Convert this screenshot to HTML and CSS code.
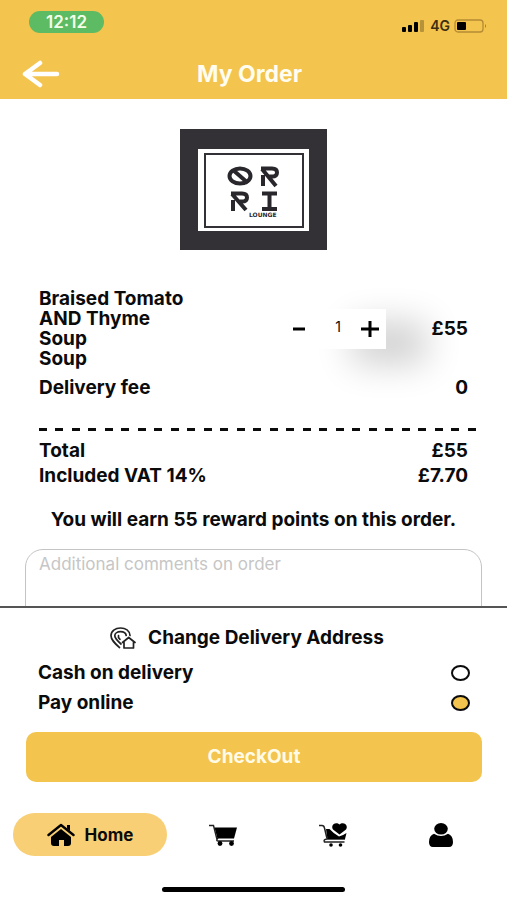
FILE: index.html
```html
<!DOCTYPE html>
<html lang="en">
<head>
<meta charset="utf-8">
<meta name="viewport" content="width=device-width, initial-scale=1">
<title>My Order</title>
<link rel="stylesheet" href="styles.css">
</head>
<body>
<header class="top">
  <div class="status">
    <span class="clock">12:12</span>
    <div class="signals">
      <svg width="24" height="12" viewBox="0 0 24 12" aria-hidden="true">
        <rect x="0" y="7" width="4" height="5" rx="1"/>
        <rect x="6" y="5" width="4" height="7" rx="1"/>
        <rect x="12" y="2" width="4" height="10" rx="1"/>
        <rect x="18" y="0" width="4" height="12" rx="1" opacity=".25"/>
      </svg>
      <span class="network">4G</span>
      <svg width="33" height="14" viewBox="0 0 33 14" aria-hidden="true">
        <rect x="1" y="1" width="28" height="12" rx="3" fill="none" stroke="#b58a34" stroke-width="1.3"/>
        <rect x="3" y="3" width="9" height="8" rx="1"/>
        <path d="M31 5q2 2 0 4z" fill="#a67c2a"/>
      </svg>
    </div>
  </div>
  <div class="titlebar">
    <button class="back" type="button" aria-label="Back">
      <svg width="38" height="28" viewBox="0 0 38 28" fill="none" stroke="#fff" stroke-width="4.500" stroke-linecap="round" stroke-linejoin="round" aria-hidden="true"><path d="M35 14H3M18 3L3 14l15 11"/></svg>
    </button>
    <h1>My Order</h1>
  </div>
</header>

<main class="order">
  <svg class="logo" width="147" height="121" viewBox="0 0 147 121" role="img" aria-label="Orri Lounge">
    <rect width="147" height="121" fill="#333135"/>
    <rect x="18" y="20" width="111" height="82" fill="#fff"/>
    <rect x="25" y="25" width="98" height="73" fill="none" stroke="#333135" stroke-width="2"/>
    <g fill="none" stroke="#29272b" stroke-width="4">
      <ellipse cx="60" cy="47" rx="10.500" ry="7.500"/>
      <path d="M53 41L68 54"/>
      <path d="M81 39.500h11q5 0 5 4t-5 4h-4M82 40l14 17M83 46v11"/>
      <path d="M51 64.500h11q5 0 5 4t-5 4h-4M52 65l14 16M53 71v11"/>
      <path d="M82 64.500h15M82 80h15M89.500 65v15"/>
    </g>
    <text class="logo-text" x="69" y="88">LOUNGE</text>
  </svg>

  <section class="bill">
    <div class="item">
      <p class="name">Braised Tomato AND Thyme Soup<br>Soup</p>
      <div class="stepper">
        <button type="button" aria-label="Decrease quantity"><svg width="12" height="18" viewBox="0 0 12 18" aria-hidden="true"><path d="M0 9h12" stroke="#000" stroke-width="3"/></svg></button>
        <div class="more">
          <span class="count">1</span>
          <button type="button" aria-label="Increase quantity"><svg width="18" height="18" viewBox="0 0 18 18" aria-hidden="true"><path d="M0 9h18M9 1v16" stroke="#000" stroke-width="3"/></svg></button>
        </div>
      </div>
      <span class="price">£55</span>
    </div>
    <div class="row fee"><span>Delivery fee</span><span>0</span></div>
    <div class="divider"></div>
    <div class="row"><span>Total</span><span>£55</span></div>
    <div class="row"><span>Included VAT 14%</span><span>£7.70</span></div>
  </section>
  <p class="reward">You will earn 55 reward points on this order.</p>
  <textarea class="comments" aria-label="Additional comments on order" placeholder="Additional comments on order"></textarea>
</main>

<section class="sheet">
  <button class="address" type="button">
    <svg width="26" height="22" viewBox="0 0 26 22" fill="none" stroke="#222" stroke-width="1.700" stroke-linejoin="round" stroke-linecap="round" aria-hidden="true">
      <path d="M9.500 20.500C5 16.500 1 13 1 8.800C1 4.200 5.200 1 10.500 1C15.600 1 19.500 3.800 20 8.500"/>
      <path d="M11 17C7 13.500 4.800 11.500 4.800 8.800C4.800 6.500 7.200 4.700 10.500 4.700C13.500 4.700 15.800 6 16.200 8.500"/>
      <path d="M10 12.300Q7.800 10.500 8.500 8.600"/>
      <path d="M12.500 15.500L18.700 10.500l6.300 5h-1.500V21h-9.500v-5.500z"/>
    </svg>
    Change Delivery Address
  </button>
  <label class="row pay">Cash on delivery<input type="radio" name="pay"></label>
  <label class="row pay">Pay online<input type="radio" name="pay" checked></label>
  <button class="checkout" type="button">CheckOut</button>
</section>

<nav class="tabs" aria-label="Main">
  <a class="tab active" href="#home" aria-current="page">
    <svg width="28" height="23" viewBox="0 0 28 23" aria-hidden="true">
      <path d="M1.500 12L14 2l12.500 10" fill="none" stroke="#000" stroke-width="2.400" stroke-linecap="round" stroke-linejoin="round"/>
      <path d="M20 2h3v6l-3-2.400zM14 6l10 8v6q0 3-3 3h-4v-6h-5v6H7q-3 0-3-3v-6z"/>
    </svg>
    Home
  </a>
  <a class="tab" href="#cart" aria-label="Cart">
    <svg width="28" height="22" viewBox="0 0 28 22" aria-hidden="true">
      <path d="M0 1.500h4.500L8 15.500M9 14Q6.500 17 9 17h16" fill="none" stroke="#222" stroke-width="1.400"/>
      <path d="M5.500 3.500H28L25 14.500H8.500z"/>
      <circle cx="11" cy="19.500" r="2.400"/><circle cx="22.500" cy="19.500" r="2.400"/>
    </svg>
  </a>
  <a class="tab" href="#favourites" aria-label="Favourites">
    <svg width="28" height="24" viewBox="0 0 28 24" aria-hidden="true">
      <path d="M0 2.500h3q2 0 2.500 2.500L8 15.500M8 16H26M8 16Q4 16.500 5.500 19H25.500" fill="none" stroke="#222" stroke-width="1.500"/>
      <path d="M7 6h3.500Q14 10 20 13.500Q24 12.500 27.500 10L26 16H8.500z"/>
      <path d="M20.500 11.500L14 6.500C11 2 17 -2 20.500 1.500C24 -2 30 2 27 6.500z"/>
      <circle cx="12" cy="22" r="1.800"/><circle cx="21.500" cy="22" r="1.800"/>
    </svg>
  </a>
  <a class="tab" href="#profile" aria-label="Profile">
    <svg width="24" height="24" viewBox="0 0 24 24" aria-hidden="true">
      <ellipse cx="12" cy="5.800" rx="6.800" ry="5.800"/>
      <path d="M5 10.800q7 4.500 14 0 5 2 5 8.200 0 5-4 5H4q-4 0-4-5 0-6.200 5-8.200z"/>
    </svg>
  </a>
</nav>
<div class="home-bar"></div>
</body>
</html>
```
FILE: styles.css
```css
* {
  box-sizing: border-box;
}

body {
  margin: 0;
  height: 100vh;
  display: flex;
  flex-direction: column;
  overflow: hidden;
  background: #fff;
  color: #0b0b0b;
  font: 700 19px/20px Inter, "Liberation Sans", sans-serif;
  font-optical-sizing: none;
}

button,
textarea {
  font: inherit;
  font-optical-sizing: none;
  color: inherit;
}

button {
  border: 0;
  padding: 0;
  background: none;
}

svg {
  display: block;
  flex: none;
}

h1,
p {
  margin: 0;
}

.top {
  flex: none;
  background: #f3c44e;
  padding: 11px 20px 11px 22px;
}

.status,
.signals {
  display: flex;
  align-items: center;
}

.status {
  justify-content: space-between;
  padding-left: 7px;
}

.signals {
  gap: 4px;
  padding-top: 8px;
}

.clock {
  background: #5dbb63;
  color: #f4ffe9;
  border-radius: 11px;
  width: 75px;
  text-align: center;
  font-size: 17px;
  font-weight: 600;
  line-height: 22px;
}

.network {
  font-size: 14px;
  font-weight: 600;
  line-height: 14px;
  color: #3d2f10;
}

.titlebar {
  display: grid;
  grid-template-columns: 38px 1fr 48px;
  align-items: center;
  margin-top: 27px;
}

h1 {
  font-size: 23px;
  line-height: 28px;
  font-weight: 700;
  color: #fffdf0;
  text-align: center;
}

.order {
  flex: 1;
  min-height: 0;
  overflow: hidden;
  padding: 30px 25px 0;
}

.logo {
  margin: 0 auto;
}

.logo-text {
  font: 700 6px "DejaVu Sans", sans-serif;
  fill: #29272b;
}

.bill {
  padding: 39px 14px 0;
}

.item {
  display: flex;
  align-items: center;
}

.name {
  width: 150px;
}

.stepper {
  display: flex;
  align-items: center;
  margin-left: auto;
}

.more {
  display: flex;
  align-items: center;
  justify-content: flex-end;
  gap: 20px;
  width: 74px;
  height: 40px;
  margin-left: 7px;
  padding-right: 7px;
  background: #fff;
  box-shadow: 40px 14px 36px 0 #0003;
}

.count {
  font-size: 14px;
  font-weight: 400;
  padding-bottom: 4px;
}

.price {
  width: 82px;
  text-align: right;
  z-index: 1;
}

.row {
  display: flex;
  justify-content: space-between;
  align-items: center;
  line-height: 25px;
}

.fee {
  margin-top: 6px;
}

.divider {
  height: 3px;
  margin: 28px -8px 7px 0;
  background: repeating-linear-gradient(90deg, #0b0b0b 0 8px, transparent 8px 16px, #0b0b0b 16px 24px, transparent 24px 33px);
}

.reward {
  margin-top: 22px;
  text-align: center;
}

.comments {
  display: block;
  width: 100%;
  height: 110px;
  margin-top: 19px;
  padding: 4px 13px;
  border: 1px solid #c4c4c4;
  border-radius: 18px;
  background: #fff;
  font-size: 17px;
  font-weight: 400;
  resize: none;
}

.comments::placeholder {
  color: #c6c6c6;
}

.sheet {
  flex: none;
  border-top: 2px solid #555;
  padding: 19px 25px 0 26px;
}

.address {
  display: flex;
  align-items: center;
  gap: 12px;
  margin: 0 auto 9px;
  padding-right: 14px;
}

.pay {
  padding: 0 12px;
  line-height: 30px;
}

.pay input {
  appearance: none;
  width: 19px;
  height: 16px;
  margin: 0;
  border: 2px solid #0b0b0b;
  border-radius: 50%;
  background: #fff;
}

.pay input:checked {
  background: #f3c44e;
}

.checkout {
  display: block;
  width: 100%;
  height: 50px;
  margin-top: 14px;
  border-radius: 10px;
  background: #f3c44e;
  color: #fffbe6;
}

.tabs {
  flex: none;
  display: flex;
  align-items: center;
  justify-content: space-between;
  padding: 31px 54px 31px 13px;
}

.tab {
  color: inherit;
  text-decoration: none;
  font-size: 17px;
}

.active {
  display: flex;
  align-items: center;
  justify-content: center;
  gap: 10px;
  width: 154px;
  height: 43px;
  margin-right: -40px;
  border-radius: 22px;
  background: #f8cf74;
}

.home-bar {
  flex: none;
  align-self: center;
  width: 36%;
  height: 5px;
  margin-bottom: 8px;
  border-radius: 3px;
  background: #000;
}
```
